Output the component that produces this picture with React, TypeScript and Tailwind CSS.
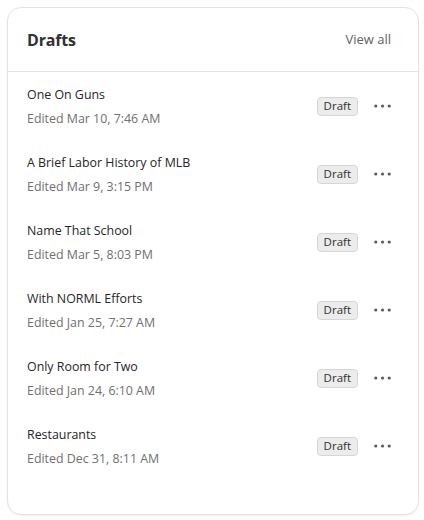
import React from "react";

const drafts = [
  { title: "One On Guns", edited: "Edited Mar 10, 7:46 AM" },
  { title: "A Brief Labor History of MLB", edited: "Edited Mar 9, 3:15 PM" },
  { title: "Name That School", edited: "Edited Mar 5, 8:03 PM" },
  { title: "With NORML Efforts", edited: "Edited Jan 25, 7:27 AM" },
  { title: "Only Room for Two", edited: "Edited Jan 24, 6:10 AM" },
  { title: "Restaurants", edited: "Edited Dec 31, 8:11 AM" },
];

const Dots = () => (
  <svg width="17" height="6" viewBox="0 0 17 6" className="text-[#5a5a5a]">
    <circle cx="1.8" cy="3" r="1.6" fill="currentColor" />
    <circle cx="8.5" cy="3" r="1.6" fill="currentColor" />
    <circle cx="15.2" cy="3" r="1.6" fill="currentColor" />
  </svg>
);

const App = () => {
  return (
    <div className="w-[424px] h-[520px] bg-white pt-[7px] pl-[7px] font-['Open_Sans',sans-serif]">
      <div className="w-[412px] h-[508px] rounded-[14px] border border-[#e3e3e3] bg-white shadow-[0_1px_2px_rgba(0,0,0,0.06)]">
        <div className="flex items-center justify-between h-[64px] pl-[19px] pr-[27px] border-b border-[#e3e3e3]">
          <h1 className="text-[16px] font-bold text-[#303030] tracking-[-0.2px]">Drafts</h1>
          <button className="text-[13px] text-[#616161]">View all</button>
        </div>
        <ul>
          {drafts.map((d) => (
            <li key={d.title} className="flex items-center justify-between h-[68px] pl-[19px] pr-[27px]">
              <div className="flex flex-col gap-1 pt-[2px]">
                <span className="text-[12.4px] leading-5 font-medium text-[#262626]">{d.title}</span>
                <span className="text-[12.4px] leading-5 text-[#707070]">{d.edited}</span>
              </div>
              <div className="flex items-center gap-[16px]">
                <span className="h-[19px] px-[6px] flex items-center rounded-[4px] border border-[#d6d6d6] bg-[#ececec] text-[11.5px] text-[#303030]">
                  Draft
                </span>
                <Dots />
              </div>
            </li>
          ))}
        </ul>
      </div>
    </div>
  );
};

export default App;
